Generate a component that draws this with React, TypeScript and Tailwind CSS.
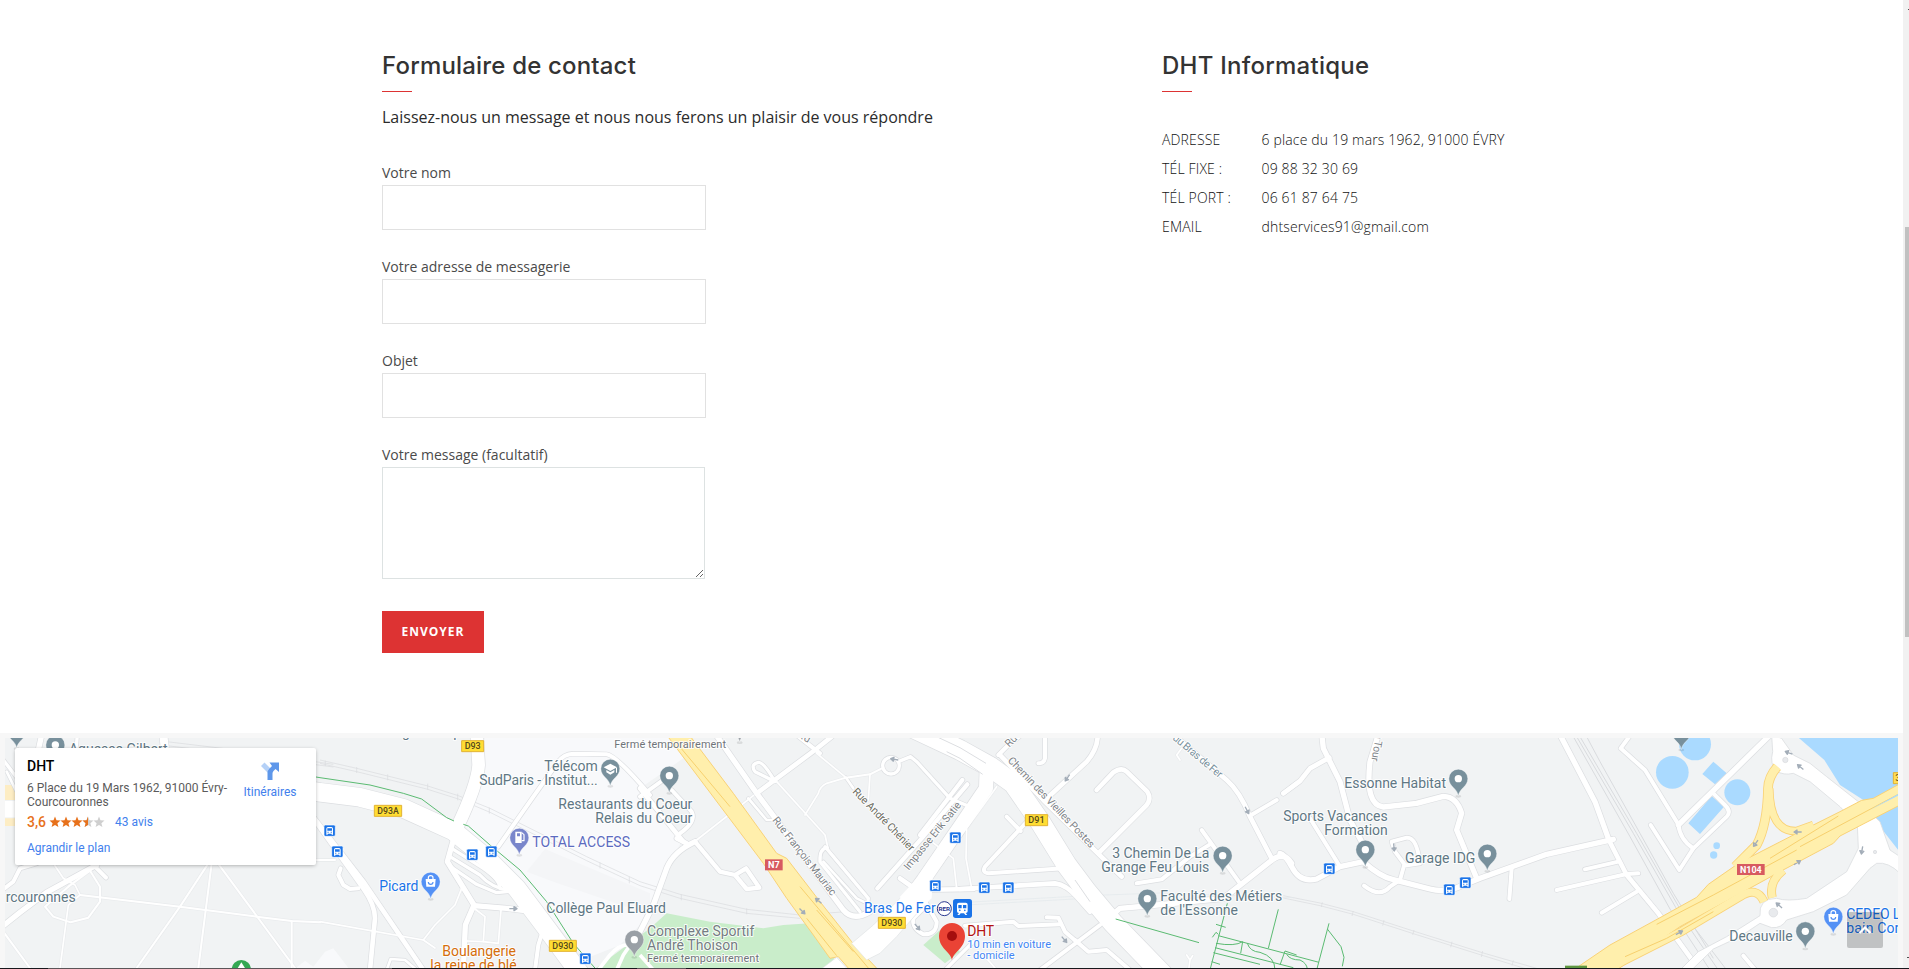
import React from "react";

const TILE = [0, 960, 1920, 2880, 3840, 4740];

type Road = [number, number, string];

const ROADS: Road[] = [
  [0, 16, "M-10,618 L60,562 L140,502 L290,420"],
  [0, 12, "M0,500 L40,470 L60,430 L110,415"],
  [0, 12, "M285,425 L318,458"],
  [0, 6, "M135,545 L205,485 L270,437 L300,485 L300,530 L265,578 L212,592 L160,575 Z"],
  [0, 5, "M160,415 L190,460 L225,480 L240,510 L205,540 L180,729"],
  [0, 6, "M240,510 L540,545 L770,575 L875,588 L960,592"],
  [0, 6, "M625,415 L540,545 L410,729"],
  [0, 6, "M635,415 L595,729"],
  [0, 6, "M650,410 L885,729"],
  [0, 6, "M875,588 L875,729"],
  [0, 6, "M10,620 L90,729"],
  [0, 6, "M940,405 L1000,405"],
  [0, 16, "M125,30 L115,75"],
  [0, 10, "M232,30 L228,75"],
  [0, 24, "M490,30 L495,75"],
  [0, 10, "M10,105 L60,170"],
  [0, 8, "M20,140 L50,200"],
  [1, 14, "M-30,265 L130,490 Q165,540 165,580 L150,735"],
  [1, 14, "M-25,270 L130,470 L310,735"],
  [1, 38, "M470,25 L476,120 Q472,180 410,310"],
  [1, 12, "M535,365 L640,215 L715,110 Q730,88 760,86 L860,88 Q890,92 990,210"],
  [1, 16, "M400,345 L382,410 L462,540 L436,600 L430,735"],
  [1, 16, "M462,542 L560,550 L640,560"],
  [1, 10, "M395,370 L490,430 Q540,465 540,490"],
  [1, 10, "M390,395 L480,450 Q520,495 585,498"],
  [1, 10, "M392,425 L470,478 L530,503 L580,498"],
  [1, 5, "M425,490 L405,540 L345,600 L310,645 L0,590"],
  [1, 5, "M310,645 L345,669"],
  [1, 5, "M465,552 L495,575 L490,650 L440,648"],
  [1, 5, "M543,555 L535,655 L490,650"],
  [1, 12, "M62,430 L55,450 L70,480 L90,492 L115,490"],
  [1, 6, "M0,405 L45,405"],
  [1, 8, "M200,735 L212,702 L255,705 L290,735"],
  [1, 12, "M665,628 L655,660 L645,735"],
  [1, 12, "M675,635 L740,710"],
  [2, 16, "M225,25 L350,205 L610,555 Q640,590 690,560"],
  [2, 14, "M110,340 L140,355"],
  [2, 14, "M350,205 L525,75 L575,35"],
  [2, 12, "M470,30 L540,85"],
  [2, 10, "M395,165 L345,140 Q330,118 355,112 Q370,110 405,170"],
  [2, 5, "M170,345 L340,212"],
  [2, 5, "M530,85 L618,158 L560,175 Q540,185 535,205 L495,270"],
  [2, 5, "M410,170 L555,330 L565,375"],
  [2, 6, "M618,158 L690,148 L730,128"],
  [2, 8, "M618,158 L640,190"],
  [2, 5, "M690,148 L685,225"],
  [2, 10, "M778,122 A25,25 0 1 1 728,122 A25,25 0 1 1 778,122"],
  [2, 10, "M775,110 L812,95 L830,110 L930,220 L1000,250"],
  [2, 13, "M967,165 L840,330"],
  [2, 13, "M982,178 L845,340 L712,490"],
  [2, 10, "M562,368 Q538,370 540,410 L660,560"],
  [2, 10, "M555,365 L685,520 L680,560"],
  [2, 8, "M550,410 L650,520 L670,530"],
  [2, 8, "M325,220 L380,285 L400,285"],
  [2, 14, "M0,190 L130,350"],
  [2, 12, "M0,215 L90,150"],
  [2, 12, "M95,195 L155,260 Q170,290 120,325"],
  [2, 16, "M-10,640 L40,540 L80,430 Q100,380 165,350"],
  [2, 13, "M165,350 L240,440 L285,450 L318,430 L358,488 L320,492 L285,450"],
  [2, 14, "M780,460 L830,495 L1000,492"],
  [2, 5, "M875,350 L940,400 L950,490"],
  [2, 12, "M850,520 L890,590 Q890,630 850,628 Q815,610 820,580 L850,550"],
  [2, 10, "M915,735 L1000,650"],
  [3, 5, "M110,185 L20,310 L18,400 L35,490"],
  [3, 12, "M115,90 L145,60 L190,25"],
  [3, 14, "M120,90 L250,225 L485,455"],
  [3, 14, "M413,25 Q415,70 380,110 L255,225"],
  [3, 12, "M255,25 L255,100 Q252,115 235,115"],
  [3, 14, "M410,195 L460,142 Q485,125 500,140 L562,200 Q575,220 560,240 L415,385"],
  [3, 12, "M140,275 L182,318"],
  [3, 12, "M210,280 L75,425 Q65,442 85,445 L310,430"],
  [3, 14, "M0,492 L285,475 Q320,480 350,515 L390,560"],
  [3, 16, "M440,585 L480,550 L560,543 L790,520 L930,410 Q970,375 995,415"],
  [3, 12, "M725,315 L840,475"],
  [3, 12, "M750,358 L690,395 L605,463 L530,475"],
  [3, 14, "M635,25 L800,165 Q840,200 870,275 L935,400"],
  [3, 12, "M870,272 L950,225"],
  [3, 12, "M970,205 L1010,175"],
  [3, 5, "M665,70 L650,90 L660,105"],
  [3, 12, "M15,602 L160,590 L175,603 L300,598"],
  [3, 12, "M260,577 L295,578 L315,620 L350,650"],
  [3, 12, "M420,600 L240,735"],
  [3, 12, "M345,645 L385,680 L440,675 L510,735"],
  [3, 5, "M80,700 L110,735"],
  [3, 5, "M680,690 L690,705 L698,692 M690,705 L686,735"],
  [4, 16, "M0,385 Q15,388 35,425 Q60,475 110,462 L180,425 L250,410 Q300,455 340,464 L450,492 Q500,505 550,480 L600,460 L800,388 L1000,343"],
  [4, 16, "M125,25 L130,70 L180,170 L210,285 L245,350"],
  [4, 14, "M148,98 L90,130 L60,168 L10,205"],
  [4, 16, "M296,25 L270,110 Q255,240 310,246 L410,235 L490,214 Q530,215 545,265 L530,315 L590,460"],
  [4, 12, "M90,280 L180,425"],
  [4, 12, "M375,420 L345,380 L335,350 L380,338 Q410,335 420,415 L372,422 L360,465 L330,485 Q300,520 252,482"],
  [4, 12, "M695,430 L688,522"],
  [4, 16, "M835,20 L945,230 L985,340"],
  [5, 14, "M85,342 L140,450 L235,565 L340,710"],
  [5, 12, "M15,433 L115,410"],
  [5, 12, "M-70,495 L140,447 L175,445"],
  [5, 12, "M65,563 L170,500"],
  [5, 12, "M155,25 L122,70 L195,135 L295,298 Q300,345 340,370 L440,275 Q455,260 435,240 L400,205"],
  [5, 16, "M575,25 L295,300"],
  [5, 12, "M340,370 L298,435 L212,300"],
  [5, 12, "M490,692 L530,740"],
];

const YELLOW: Road[] = [
  [5, 24, "M592,125 Q565,155 564,190 Q562,300 530,360 L465,425"],
  [5, 20, "M568,190 Q570,322 650,318 L700,300"],
  [5, 22, "M610,435 Q565,470 577,518"],
  [5, 22, "M110,718 L300,622 L480,515 Q530,482 552,530"],
];

const at = (t: number, x = 0, y = 0) => `translate(${TILE[t] + x} ${y})`;

type Lbl = { t: number; x: number; y: number; w: number; s: string; c?: string; f?: number; r?: number };

const LABELS: Lbl[] = [
  { t: 0, x: 207, y: 87, w: 296, s: "Aguesse Gilbert" },
  { t: 0, x: 17, y: 531, w: 210, s: "rcouronnes" },
  { t: 1, x: 178, y: 36, w: 320, s: "Collège Galilée épinette" },
  { t: 1, x: 883, y: 68, w: 335, s: "Fermé temporairement", f: 33, c: "#70757a" },
  { t: 1, x: 673, y: 138, w: 160, s: "Télécom" },
  { t: 1, x: 478, y: 180, w: 355, s: "SudParis - Institut..." },
  { t: 1, x: 715, y: 252, w: 402, s: "Restaurants du Coeur" },
  { t: 1, x: 826, y: 294, w: 291, s: "Relais du Coeur" },
  { t: 1, x: 637, y: 367, w: 293, s: "TOTAL ACCESS", c: "#5c6bc0" },
  { t: 1, x: 178, y: 498, w: 117, s: "Picard", c: "#1a73e8" },
  { t: 1, x: 679, y: 564, w: 359, s: "Collège Paul Eluard" },
  { t: 1, x: 367, y: 694, w: 221, s: "Boulangerie", c: "#d56e0c" },
  { t: 1, x: 331, y: 736, w: 259, s: "la reine de blé", c: "#d56e0c" },
  { t: 2, x: 21, y: 633, w: 322, s: "Complexe Sportif", c: "#757c82" },
  { t: 2, x: 21, y: 675, w: 273, s: "André Thoison", c: "#757c82" },
  { t: 2, x: 21, y: 710, w: 336, s: "Fermé temporairement", f: 33, c: "#70757a" },
  { t: 2, x: 672, y: 564, w: 215, s: "Bras De Fer", c: "#1a73e8" },
  { t: 2, x: 396, y: 286, w: 290, s: "Rue François Mauriac", f: 32, r: 52, c: "#808489" },
  { t: 2, x: 636, y: 202, w: 250, s: "Rue André Chénier", f: 32, r: 45.5, c: "#6b6b5f" },
  { t: 2, x: 806, y: 437, w: 252, s: "Impasse Erik Satie", f: 32, r: -51, c: "#808489" },
  { t: 2, x: 470, y: 34, w: 40, s: "Rd", f: 32, r: 30, c: "#808489" },
  { t: 3, x: 148, y: 68, w: 52, s: "Rue", f: 32, r: -46, c: "#808489" },
  { t: 3, x: 142, y: 108, w: 362, s: "Chemin des Vieilles Postes", f: 32, r: 46.5, c: "#808489" },
  { t: 3, x: 636, y: 42, w: 184, s: "du Bras de Fer", f: 32, r: 40, c: "#78909c" },
  { t: 3, x: 457, y: 399, w: 291, s: "3 Chemin De La" },
  { t: 3, x: 424, y: 441, w: 324, s: "Grange Feu Louis" },
  { t: 3, x: 601, y: 528, w: 366, s: "Faculté des Métiers" },
  { t: 3, x: 601, y: 570, w: 233, s: "de l'Essonne" },
  { t: 3, x: 22, y: 632, w: 80, s: "DHT", c: "#b31412" },
  { t: 3, x: 22, y: 668, w: 251, s: "10 min en voiture", f: 33, c: "#4285f4" },
  { t: 3, x: 22, y: 701, w: 142, s: "- domicile", f: 33, c: "#4285f4" },
  { t: 4, x: 290, y: 16, w: 92, s: "la Tour", f: 32, r: 100, c: "#808489" },
  { t: 4, x: 193, y: 189, w: 305, s: "Essonne Habitat" },
  { t: 4, x: 10, y: 288, w: 313, s: "Sports Vacances" },
  { t: 4, x: 133, y: 330, w: 190, s: "Formation" },
  { t: 4, x: 375, y: 414, w: 211, s: "Garage IDG" },
  { t: 5, x: 448, y: 648, w: 190, s: "Decauville" },
  { t: 5, x: 799, y: 582, w: 205, s: "CEDEO Les", c: "#1a73e8" },
  { t: 5, x: 799, y: 624, w: 227, s: "bain Corbeil", c: "#1a73e8" },
];

const PINS: [number, number, number, string, string][] = [
  [0, 50, 18, "#78909c", "dot"],
  [0, 166, 60, "#78909c", "dot"],
  [1, 871, 131, "#78909c", "cap"],
  [1, 598, 338, "#7986cb", "fuel"],
  [1, 332, 470, "#5491f5", "bag"],
  [1, 943, 644, "#9aa0a6", "dot"],
  [2, 88, 152, "#78909c", "dot"],
  [2, 299, 0, "#9aa0a6", "dot"],
  [3, 788, 392, "#78909c", "dot"],
  [3, 562, 521, "#78909c", "dot"],
  [4, 535, 161, "#78909c", "dot"],
  [4, 256, 374, "#78909c", "dot"],
  [4, 622, 386, "#78909c", "dot"],
  [5, 304, 22, "#78909c", "dot"],
  [5, 676, 619, "#78909c", "dot"],
  [5, 760, 575, "#5491f5", "bag"],
];

const BUSES: [number, number, number][] = [
  [1, 29, 317], [1, 52, 380], [1, 457, 389], [1, 514, 380], [1, 796, 701],
  [2, 946, 338], [2, 886, 482], [3, 73, 488], [3, 145, 488],
  [4, 148, 431], [4, 508, 494], [4, 556, 473],
];

const BADGES: [number, number, number, number, string, boolean][] = [
  [1, 425, 47, 66, "D93", false],
  [1, 163, 241, 82, "D93A", false],
  [1, 688, 646, 81, "D930", false],
  [2, 715, 577, 81, "D930", false],
  [3, 196, 269, 67, "D91", false],
  [2, 375, 403, 53, "N7", true],
  [5, 471, 417, 83, "N104", true],
];

const ARROWS: [number, number, number, number][] = [
  [1, 580, 551, 0], [2, 535, 527, -140], [2, 487, 559, 45], [2, 763, 103, 190], [2, 832, 606, 50],
  [3, 322, 159, 125], [3, 861, 256, 62], [3, 313, 644, 50], [4, 342, 367, 85],
  [5, 626, 83, 200], [5, 661, 126, 220], [5, 653, 321, 180], [5, 527, 355, 125],
  [5, 652, 413, -32], [5, 846, 376, 100], [5, 298, 623, -30], [5, 597, 541, 220],
];

function Pin({ t, x, y, color, kind }: { t: number; x: number; y: number; color: string; kind: string }) {
  return (
    <g transform={at(t, x, y)}>
      <ellipse cx="0" cy="53" rx="9" ry="4" fill="#000" opacity=".1" />
      <path d="M0,52 C-3,28 -28,25 -28.5,0 A28.5,28.5 0 0 1 28.5,0 C28,25 3,28 0,52Z" fill={color} stroke="#fff" strokeWidth="2" strokeOpacity=".6" />
      {kind === "dot" && <circle r="11" fill="#fff" />}
      {kind === "cap" && (
        <g fill="#fff">
          <path d="M-20,-4 L0,-15 L20,-4 L0,7Z" />
          <path d="M-12,4 L0,11 L12,4 V11 L0,18 L-12,11Z M17,-3 H20 V12 H17Z" />
        </g>
      )}
      {kind === "fuel" && (
        <g fill="#fff">
          <path fillRule="evenodd" d="M-12,-18 H7 V16 H-12Z M-7,-13 V-4 H2 V-13Z" />
          <path d="M7,-15 L14,-9 V9 H7" fill="none" stroke="#fff" strokeWidth="3.5" />
        </g>
      )}
      {kind === "bag" && (
        <g>
          <path d="M-15,-8 H15 L13,15 H-13Z" fill="#fff" />
          <path d="M-7,-8 V-12 A7,6 0 0 1 7,-12 V-8" fill="none" stroke="#fff" strokeWidth="3.5" />
          <path d="M-7,1 A7,7 0 0 0 7,1" fill="none" stroke={color} strokeWidth="3.5" />
        </g>
      )}
    </g>
  );
}

function BusStop({ t, x, y }: { t: number; x: number; y: number }) {
  return (
    <g transform={at(t, x, y)}>
      <rect x="-17" y="-17" width="34" height="34" rx="4" fill="#1a73e8" stroke="#fff" strokeWidth="2" />
      <path fillRule="evenodd" fill="#fff" d="M-10,-6 Q-10,-11 -5,-11 H5 Q10,-11 10,-6 V12 H6 V9 H-6 V12 H-10Z M-7,-7 V0 H7 V-7Z M-6.500,3 V6 H-3 V3Z M3,3 V6 H6.500 V3Z" />
    </g>
  );
}

function Badge({ t, x, y, w, s, red }: { t: number; x: number; y: number; w: number; s: string; red: boolean }) {
  return (
    <g transform={at(t, x, y)}>
      <rect width={w} height="33" fill={red ? "#d75a60" : "#ffdd33"} stroke={red ? "#d75a60" : "#e2b233"} strokeWidth={red ? 0 : 3} />
      <text x={w / 2} y="25.500" textAnchor="middle" textLength={w - 18} lengthAdjust="spacingAndGlyphs" fontSize="27" fontWeight={red ? 700 : 500} fill={red ? "#fff" : "#54481c"}>
        {s}
      </text>
    </g>
  );
}

function CityMap() {
  return (
    <svg className="block h-[230px] w-[1893px]" viewBox="15 39 5679 690" fontFamily="Roboto, sans-serif" strokeLinejoin="round">
      <rect x="0" y="0" width="5800" height="760" fill="#f1f3f4" />

      <path transform={at(0)} fill="#fdedc4" d="M10,180 H60 V225 H10Z M10,280 H60 V303 H10Z" />
      <path transform={at(0)} fill="#fff" d="M10,228 H60 V277 H10Z" />
      <path transform={at(0)} fill="#f8f9fb" d="M880,735 L915,707 L940,725 L975,680 L1000,670 L1050,735Z" />
      <path transform={at(1)} fill="#f8f9fb" d="M495,35 H1060 L1090,100 L960,190 L1090,340 L1020,470 L990,560 L960,600 L900,660 L800,700 L620,500 L430,300Z" />
      <path transform={at(1)} fill="#f4f5f7" d="M620,440 L675,372 L990,505 L990,570 L700,470Z" />
      <path transform={at(1)} fill="#c9edca" d="M820,735 L990,610 L1040,565 L1170,590 L1330,610 L1390,600 L1470,595 L1545,705 L1500,735Z" />
      <path transform={at(2)} fill="#c9edca" d="M850,660 L900,615 L960,680 L915,715Z" />
      <path transform={at(1)} fill="none" stroke="#fff" strokeWidth="11" d="M835,735 L870,690 Q900,655 930,660 M890,735 L910,690 L965,610 M960,690 L1000,735" />

      <g transform={at(5)} fill="#aadaff">
        <circle cx="277" cy="142" r="49" />
        <circle cx="345" cy="58" r="48" />
        <circle cx="472" cy="202" r="39" />
        <path d="M400,110 L440,145 L405,178 L367,147Z M395,213 L432,245 L360,327 L325,295Z" />
        <circle cx="410" cy="362" r="10" />
        <circle cx="401" cy="390" r="11" />
        <path d="M652,35 L733,105 L780,180 L850,225 L880,280 L960,382 V35Z" />
      </g>

      <g fill="none" stroke="#d9dbde" strokeWidth="2">
        <path transform={at(0)} d="M500,50 L700,74 L1000,118 M500,62 L700,86 L1000,126" />
        <path transform={at(1)} d="M0,105 L110,130 L320,182 L415,212 L510,250 L630,310 L800,395 L960,470 L1080,508 L1280,553 L1440,570 L1580,560 M0,115 L110,140 L320,192 L415,222 L510,262 L630,322 L800,407 L960,482 L1080,520 L1280,565 L1440,580" />
        <path transform={at(1)} d="M16,107 V123 M110,126 V144 M203,148 V166 M323,176 V194 M413,206 V226 M508,248 V266 M840,412 V430 M928,455 V475 M1084,508 V526 M1280,550 V568" />
        <path transform={at(4)} d="M10,512 L120,534 L220,560 L400,618 L610,684 L770,730 M10,519 L120,542 L220,568 L400,626 L610,692 L740,732 M127,532 L124,546 M220,558 L216,573 M312,585 L308,602 M402,615 L398,630 M516,650 L512,667 M608,678 L604,696 M700,706 L696,722" />
        <path transform={at(5)} strokeWidth="3" d="M-10,35 L160,325 L290,552 L415,735 M0,35 L170,325 L300,552 L440,735 M20,35 L60,110 L180,325 L280,505 L400,700 M-20,35 L150,335 L270,552 L390,735" />
        <path transform={at(3)} stroke="#e3e8ec" d="M0,533 L380,512 L600,504 L1000,518 M0,541 L380,520" />
      </g>

      <g fill="none" stroke="#dcdee1" strokeLinecap="round">
        {ROADS.map(([t, w, d], i) => (
          <path key={i} transform={at(t)} d={d} strokeWidth={w + 4} stroke={w < 8 ? "#e9ebed" : undefined} />
        ))}
        <path transform={at(1)} strokeWidth="60" d="M-100,185 L0,202 L120,217 L250,250 L400,318 L500,400 L590,490 L680,610 L790,760" />
        <path transform={at(3)} strokeWidth="64" d="M-160,0 L0,75 L90,125 L160,175 L240,290 L320,420 L380,500 L460,595 L610,750" />
        <path transform={at(3)} strokeWidth="46" d="M80,130 L78,190 L0,305 L-110,465 L-150,520" />
      </g>
      <g fill="none" stroke="#fff" strokeLinecap="round">
        {ROADS.map(([t, w, d], i) => (
          <path key={i} transform={at(t)} d={d} strokeWidth={w} />
        ))}
        <path transform={at(1)} strokeWidth="56" d="M-100,185 L0,202 L120,217 L250,250 L400,318 L500,400 L590,490 L680,610 L790,760" />
        <path transform={at(3)} strokeWidth="60" d="M-160,0 L0,75 L90,125 L160,175 L240,290 L320,420 L380,500 L460,595 L610,750" />
        <path transform={at(3)} strokeWidth="42" d="M80,130 L78,190 L0,305 L-110,465 L-150,520" />
      </g>
      <path transform={at(3)} fill="none" stroke="#dcdee1" strokeWidth="3" d="M-70,35 L0,68 L78,115 M-40,80 L0,100 L68,148 M345,465 L390,530" />

      <path transform={at(2)} fill="#ffefac" stroke="#f9d277" strokeWidth="3" d="M80,30 L370,415 L440,520 L520,630 L570,700 L595,695 L630,735 L715,735 L635,650 L540,530 L440,400 L410,385 L280,205 L148,30Z" />
      <path transform={at(2)} fill="none" stroke="#f7d06e" strokeWidth="3" d="M115,60 L270,245 M480,485 L690,735 M500,580 L590,692 M530,555 L640,680" />
      <path transform={at(2)} fill="#fff" stroke="#e0e2e4" strokeWidth="2" d="M635,655 L700,600 L810,490 L870,440 L870,520 L770,635 L720,685 L680,705Z M540,735 L590,697 L625,735Z" />
      <path transform={at(2)} fill="#fff" d="M780,515 L880,405 L875,520 L800,590Z" />

      <path transform={at(5)} fill="#fff" stroke="#dcdee1" strokeWidth="2.500" d="M575,30 L605,40 L640,90 L690,115 L740,155 L845,238 L900,290 L930,375 L960,395 V445 Q925,410 890,415 L870,430 L800,510 L700,560 L620,585 Q605,610 575,608 L540,595 L480,635 L400,672 L335,735 H300 L355,680 L440,635 L540,572 Q535,520 590,520 Q620,530 680,520 L800,440 L835,370 L832,300 L780,245 L690,170 L640,145 Q610,152 590,138 Q568,118 578,80Z" />

      <g fill="none" strokeLinecap="butt">
        {YELLOW.map(([t, w, d], i) => (
          <path key={i} transform={at(t)} d={d} strokeWidth={w + 5} stroke="#f9d277" />
        ))}
      </g>
      <path transform={at(5)} fill="#ffefac" stroke="#f9d277" strokeWidth="3" d="M-20,735 L90,660 L240,578 L350,517 L385,478 L480,412 L650,325 L780,260 L845,226 L880,220 L960,176 V240 L780,333 L760,355 L600,440 L300,605 L110,735Z" />
      <g fill="none" stroke="#ffefac">
        {YELLOW.map(([t, w, d], i) => (
          <path key={i} transform={at(t)} d={d} strokeWidth={w} />
        ))}
      </g>
      <path transform={at(5)} fill="none" stroke="#f7d06e" strokeWidth="3" d="M135,695 L260,640 L400,560 M230,598 L400,510 L650,375 M570,400 L775,273 M660,365 L960,205" />
      <path transform={at(5)} fill="#aadaff" d="M868,256 L954,207 V212Z" />
      <g transform={at(5)} fill="#e8eaed" stroke="#d8dadd" strokeWidth="2">
        <circle cx="616" cy="105" r="8" />
        <circle cx="580" cy="563" r="13" />
        <circle cx="885" cy="381" r="5" />
      </g>

      <g fill="none" stroke="#5bbb72" strokeWidth="3">
        <path transform={at(1)} d="M-60,148 L0,158 L150,180 L250,205 L305,222 L380,278 L402,288 M430,298 L445,303 L510,360 L600,435 L680,530 L760,655 L830,735" />
        <path transform={at(3)} d="M467,582 L717,653 M802,535 L750,735 M955,553 L925,670 M768,598 L797,607 M757,637 L768,622 L775,628 M775,632 L1077,712 M765,668 L1000,728 M760,683 L900,718 M755,710 L780,718 M768,655 Q825,665 848,650 M848,650 L842,685 M862,655 Q870,680 900,682 Q945,695 945,735 M975,678 L960,720 M975,678 L1010,690 M980,688 Q990,705 1020,705 Q1042,715 1042,735" />
        <path transform={at(4)} d="M147,595 L110,735 M142,612 L183,665 L192,697 L187,724" />
      </g>

      <g fill="none" stroke="#a3adb8" strokeWidth="4">
        {ARROWS.map(([t, x, y, r], i) => (
          <path key={i} transform={`${at(t, x, y)} rotate(${r})`} d="M-12,0 H8 M2,-6 L11,0 L2,6Z" />
        ))}
      </g>

      {LABELS.map((l) => (
        <text
          key={`${l.t}-${l.x}-${l.y}`}
          transform={`${at(l.t, l.x, l.y)} rotate(${l.r ?? 0})`}
          fontSize={l.f ?? 42}
          fill={l.c ?? "#607784"}
          stroke="#fff"
          strokeWidth="6"
          strokeOpacity=".85"
          paintOrder="stroke"
          textLength={l.w}
          lengthAdjust="spacing"
        >
          {l.s}
        </text>
      ))}

      {PINS.map(([t, x, y, color, kind]) => (
        <Pin key={`${t}-${x}`} t={t} x={x} y={y} color={color} kind={kind} />
      ))}
      {BUSES.map(([t, x, y]) => (
        <BusStop key={`${t}-${x}`} t={t} x={x} y={y} />
      ))}
      {BADGES.map(([t, x, y, w, s, red]) => (
        <Badge key={`${t}-${x}`} t={t} x={x} y={y} w={w} s={s} red={red} />
      ))}

      <g transform={at(0, 724, 734)}>
        <circle r="29" fill="#34a853" />
        <path d="M0,-22 L14,0 H-14Z" fill="#fff" />
      </g>
      <rect x={TILE[4] + 855} y="722" width="66" height="12" fill="#5e9641" />
      <g transform={at(5, 940, 143)}>
        <rect width="40" height="33" fill="#ffdd55" stroke="#e2b233" strokeWidth="3" />
        <text x="6" y="26" fontSize="27" fill="#54481c">3</text>
      </g>

      <g transform={at(2, 913, 551)}>
        <circle r="21" fill="#fff" stroke="#2b3990" strokeWidth="3" />
        <text y="7" textAnchor="middle" fontSize="18" fontWeight="700" fill="#2b3990" textLength="35" lengthAdjust="spacingAndGlyphs">RER</text>
      </g>
      <g transform={at(2, 967, 551)}>
        <rect x="-28" y="-29" width="57" height="57" rx="8" fill="#1a73e8" />
        <path fillRule="evenodd" fill="#fff" d="M-16,-12 Q-16,-18 -10,-18 H10 Q16,-18 16,-12 V8 Q16,13 10,13 L15,19 H9 L5,14 H-5 L-9,19 H-15 L-10,13 Q-16,13 -16,8Z M-12,-11 V-1 H-2 V-11Z M2,-11 V-1 H12 V-11Z M-10,5 A2.500,2.500 0 1 0 -5,5 A2.500,2.500 0 1 0 -10,5Z M5,5 A2.500,2.500 0 1 0 10,5 A2.500,2.500 0 1 0 5,5Z" />
      </g>
      <g transform={at(2, 936, 633)}>
        <path d="M0,73 C-3,48 -39,38 -39,0 A39,39 0 0 1 39,0 C39,38 3,48 0,73Z" fill="#ea4335" />
        <circle r="15" fill="#a50e0e" />
      </g>
    </svg>
  );
}

const STAR = "M6 0.600 L7.500 4.300 L11.500 4.600 L8.400 7.200 L9.400 11 L6 8.900 L2.600 11 L3.600 7.200 L0.500 4.600 L4.500 4.300Z";

function Stars() {
  return (
    <svg className="ml-[3px] h-3 w-[56px]" viewBox="0 0 56 12">
      {[0, 1, 2, 3, 4].map((i) => (
        <path key={i} d={STAR} transform={`translate(${i * 11} 0)`} fill={i < 3 ? "#e7711b" : "#cfcfcf"} />
      ))}
      <path d="M6 0.600 V8.900 L2.600 11 L3.600 7.200 L0.500 4.600 L4.500 4.300Z" transform="translate(33 0)" fill="#e7711b" />
    </svg>
  );
}

function PlaceCard() {
  return (
    <div className="absolute left-[10px] top-[10px] flex h-[117px] w-[301px] justify-between rounded-[2px] bg-white pl-3 pt-[10px] font-[Roboto,sans-serif] text-[12px] leading-[14px] text-[#5b5b5b] shadow-[0_1px_4px_-1px_rgba(0,0,0,0.4)]">
      <div className="flex w-[205px] flex-col whitespace-nowrap">
        <div className="text-[14px] font-medium leading-[16px] text-black">DHT</div>
        <div className="mt-[7px]">6 Place du 19 Mars 1962, 91000 Évry-<br />Courcouronnes</div>
        <div className="mt-[5px] flex items-center leading-[16px]">
          <span className="text-[14px] font-medium text-[#e7711b]">3,6</span>
          <Stars />
          <a className="ml-[10px] text-[#427fed]">43 avis</a>
        </div>
        <a className="mt-[11px] text-[#427fed]">Agrandir le plan</a>
      </div>
      <div className="flex w-[92px] flex-col items-center pr-[3px] pt-1">
        <svg className="h-[18px] w-[18px]" viewBox="0 0 18 18">
          <path d="M0 4 L3.500 0.500 L9.500 6.500 V12 L7 11Z" fill="#b5d1f7" />
          <path d="M6.500 18 V11 Q6.500 8.500 8.500 6.500 L11 4 L8.500 0.500 H18 V10 L14.500 7 L12.500 9 Q11.500 10 11.500 11.500 V18Z" fill="#5e97ea" />
        </svg>
        <a className="mt-[5px] text-[#427fed]">Itinéraires</a>
      </div>
    </div>
  );
}

function Field({ label, area }: { label: string; area?: boolean }) {
  return (
    <label className="flex h-[94px] flex-col text-[14px] leading-[25px] text-[#4a4a4a]">
      <span>{label}</span>
      {area ? (
        <textarea className="h-[112px] w-[323px] shrink-0 resize border border-[#dde2e2] bg-white outline-none" />
      ) : (
        <input className="h-[45px] w-[324px] border border-[#e1e1e1] bg-white outline-none" />
      )}
    </label>
  );
}

const CONTACT = [
  ["ADRESSE", "6 place du 19 mars 1962, 91000 ÉVRY"],
  ["TÉL FIXE :", "09 88 32 30 69"],
  ["TÉL PORT :", "06 61 87 64 75"],
  ["EMAIL", "dhtservices91@gmail.com"],
];

export default function App() {
  return (
    <div className="flex h-[969px] w-[1909px] flex-col overflow-hidden bg-white font-['Open_Sans',sans-serif]">
      <div className="flex h-[968px]">
        <main className="flex w-[1903px] flex-col">
          <div className="flex h-[733px] pl-[382px] pt-[50px]">
            <section className="w-[780px]">
              <h2 className="h-[41px] whitespace-nowrap font-['Inter',sans-serif] text-[24px] font-medium leading-[31px] tracking-[0.18px] text-[#333]">Formulaire de contact</h2>
              <div className="h-px w-[30px] bg-[#dd3333]" />
              <p className="mt-[12px] text-[16px] leading-[26px] text-[#2b2b2b]">Laissez-nous un message et nous nous ferons un plaisir de vous répondre</p>
              <form className="mt-[30px]">
                <Field label="Votre nom" />
                <Field label="Votre adresse de messagerie" />
                <Field label="Objet" />
                <Field label="Votre message (facultatif)" area />
                <button type="button" className="mt-[75px] h-[42px] w-[102px] bg-[#dd3333] text-[12px] font-bold tracking-[1px] text-white">ENVOYER</button>
              </form>
            </section>
            <section>
              <h2 className="h-[41px] whitespace-nowrap font-['Inter',sans-serif] text-[24px] font-medium leading-[31px] tracking-[0.25px] text-[#333]">DHT Informatique</h2>
              <div className="h-px w-[30px] bg-[#dd3333]" />
              <dl className="mt-[33px] text-[14px] font-light leading-[29px] tracking-[0.16px] text-[#111]">
                {CONTACT.map(([k, v]) => (
                  <div key={k} className="flex">
                    <dt className="w-[99.5px]">{k}</dt>
                    <dd>{v}</dd>
                  </div>
                ))}
              </dl>
            </section>
          </div>
          <div className="h-[235px] bg-[#f7f7f7] pl-[5px] pt-[5px]">
            <div className="relative h-[230px] w-[1893px] overflow-hidden">
              <CityMap />
              <PlaceCard />
              <div className="absolute left-[1842px] top-[174px] flex h-9 w-9 items-center justify-center rounded-[2px] bg-black/20">
                <svg className="h-[10px] w-[14px]" viewBox="0 0 14 10">
                  <path d="M1.500 8 L7 2.500 L12.500 8" fill="none" stroke="#fff" strokeWidth="2.200" />
                </svg>
              </div>
            </div>
          </div>
        </main>
        <div className="w-[6px] bg-[#f1f1f1] pl-[2px] pt-[9px]">
          <div className="ml-[3px] h-px w-px bg-[#505050]" />
          <div className="mt-[217px] h-[410px] w-1 bg-[#c1c1c1]" />
          <div className="ml-[2px] mt-[320px] h-px w-[2px] bg-[#505050]" />
        </div>
      </div>
      <div className="flex h-px bg-[#17171c]">
        <div className="ml-12 h-px w-[344px] bg-[#5b5558]" />
        <div className="ml-[245px] h-px w-[49px] bg-[#5b5558]" />
      </div>
    </div>
  );
}
